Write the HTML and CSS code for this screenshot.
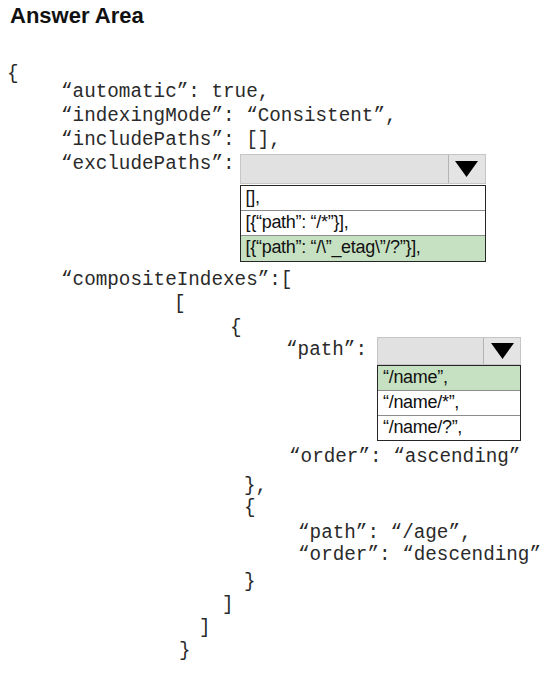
FILE: index.html
```html
<!DOCTYPE html>
<html lang="en">
<head>
<meta charset="utf-8">
<title>Answer Area</title>
<link rel="stylesheet" href="styles.css">
</head>
<body>
<h1 class="title">Answer Area</h1>
<div class="code">
  <div class="ln ind-root h18">{</div>
  <div class="ln ind-key">“automatic”: true,</div>
  <div class="ln ind-key">“indexingMode”: “Consistent”,</div>
  <div class="ln ind-key">“includePaths”: [],</div>
  <div class="row ind-key">
    <span class="label">“excludePaths”:</span>
    <div class="dd dd-exclude">
      <div class="dd-box">
        <span class="dd-field"></span>
        <span class="dd-btn"><svg width="23" height="16" viewBox="0 0 23 16"><path d="M0 0H23L11.5 16Z"/></svg></span>
      </div>
      <ul class="dd-list">
        <li>[],</li>
        <li>[{“path”: “/*”}],</li>
        <li class="sel">[{“path”: “/\”_etag\”/?”}],</li>
      </ul>
    </div>
  </div>
  <div class="ln ind-key mt6">“compositeIndexes”:[</div>
  <div class="ln ind-arr">[</div>
  <div class="ln ind-obj h22">{</div>
  <div class="row ind-path">
    <span class="label">“path”:</span>
    <div class="dd dd-path">
      <div class="dd-box">
        <span class="dd-field"></span>
        <span class="dd-btn"><svg width="23" height="16" viewBox="0 0 23 16"><path d="M0 0H23L11.5 16Z"/></svg></span>
      </div>
      <ul class="dd-list">
        <li class="sel">“/name”,</li>
        <li>“/name/*”,</li>
        <li class="last-short">“/name/?”,</li>
      </ul>
    </div>
  </div>
  <div class="ln ind-order mt4">“order”: “ascending”</div>
  <div class="ln ind-obj2 mt5 h22">},</div>
  <div class="ln ind-obj2 h25">{</div>
  <div class="ln ind-inner h22">“path”: “/age”,</div>
  <div class="ln ind-inner h27">“order”: “descending”</div>
  <div class="ln ind-obj2 h23">}</div>
  <div class="ln ind-close1 h23">]</div>
  <div class="ln ind-close2 h23">]</div>
  <div class="ln ind-close3">}</div>
</div>
</body>
</html>
```

FILE: styles.css
```css
* {
  box-sizing: border-box;
}

html, body {
  margin: 0;
  padding: 0;
  background: #ffffff;
}

body {
  width: 550px;
  height: 674px;
  overflow: hidden;
  color: #2a2a2a;
}

.title {
  margin: 3px 0 0 10px;
  font-family: "Liberation Sans", Arial, sans-serif;
  font-weight: bold;
  font-size: 22px;
  line-height: 26px;
  color: #111111;
}

.code {
  margin-top: 33px;
  font-family: "Liberation Mono", "Courier New", monospace;
  font-size: 19.3px;
  line-height: 24px;
}

.ln,
.label {
  white-space: pre;
}

.ln {
  height: 24px;
}

.h18 { height: 18px; }
.h22 { height: 22px; }
.h23 { height: 23px; }
.h25 { height: 25px; }
.h27 { height: 27px; }
.mt4 { margin-top: 4px; }
.mt5 { margin-top: 5px; }
.mt6 { margin-top: 6px; }

.ind-root { padding-left: 7px; }
.ind-key { padding-left: 61px; }
.ind-arr { padding-left: 174px; }
.ind-obj { padding-left: 230px; }
.ind-path { padding-left: 286px; }
.ind-order { padding-left: 289px; }
.ind-obj2 { padding-left: 244px; }
.ind-inner { padding-left: 298px; }
.ind-close1 { padding-left: 222px; }
.ind-close2 { padding-left: 199px; }
.ind-close3 { padding-left: 179px; }

.row {
  display: flex;
  align-items: flex-start;
}

.label {
  height: 24px;
}

.dd-exclude {
  width: 246px;
  margin-left: 5px;
  margin-top: 2px;
}

.dd-exclude .dd-box {
  height: 30px;
}

.dd-exclude .dd-list {
  margin-top: 1px;
}

.dd-path {
  width: 144px;
  margin-left: 10px;
  margin-top: -1px;
}

.dd-path .dd-box {
  height: 28px;
}

.dd-box {
  display: flex;
  border: 1px solid #c6c6c6;
  background: #e1e1e1;
}

.dd-field {
  flex: 1;
}

.dd-btn {
  width: 37px;
  border-left: 1px solid #b4b4b4;
  background: #e4e4e4;
  display: flex;
  align-items: center;
  justify-content: center;
}

.dd-btn svg path {
  fill: #000000;
}

.dd-list {
  list-style: none;
  margin: 0;
  padding: 0;
  border: 1px solid #262626;
  background: #ffffff;
  font-family: "Liberation Sans", Arial, sans-serif;
  font-size: 18px;
  letter-spacing: -0.3px;
  line-height: 23px;
  color: #111111;
}

.dd-list li {
  height: 25px;
  padding-left: 5px;
  border-bottom: 1px solid #8c8c8c;
  white-space: pre;
}

.dd-list li:last-child {
  border-bottom: none;
}

.dd-list li.last-short {
  height: 24px;
}

.dd-list li.sel {
  background: #c6e1c2;
}
```
